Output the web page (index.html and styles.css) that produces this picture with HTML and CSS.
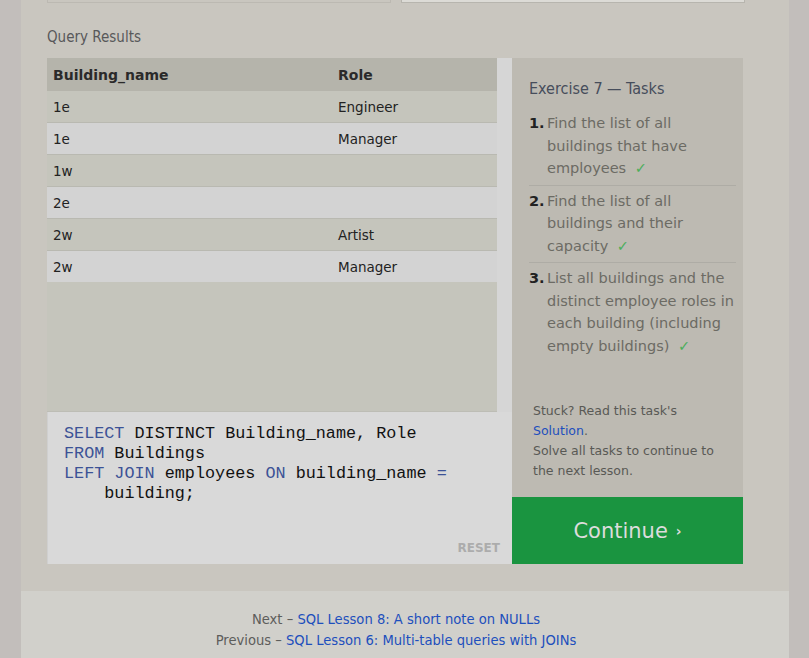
FILE: index.html
```html
<!DOCTYPE html>
<html>
<head>
<meta charset="utf-8">
<link rel="stylesheet" href="styles.css">
</head>
<body>
<div class="page">
  <div class="main">
    <div class="top-row">
      <div class="top-box"></div>
      <div class="top-box light"></div>
    </div>
    <div class="label">Query Results</div>
    <div class="exercise">
      <div class="left">
        <div class="results">
          <div class="table-wrap">
            <table class="results-table">
              <thead>
                <tr><th class="c1">Building_name</th><th>Role</th></tr>
              </thead>
              <tbody>
                <tr><td>1e</td><td>Engineer</td></tr>
                <tr><td>1e</td><td>Manager</td></tr>
                <tr><td>1w</td><td></td></tr>
                <tr><td>2e</td><td></td></tr>
                <tr><td>2w</td><td>Artist</td></tr>
                <tr><td>2w</td><td>Manager</td></tr>
              </tbody>
            </table>
          </div>
          <div class="scroll-track"></div>
        </div>
        <div class="editor">
<pre class="code"><span class="kw">SELECT</span> DISTINCT Building_name, Role
<span class="kw">FROM</span> Buildings
<span class="kw">LEFT JOIN</span> employees <span class="kw">ON</span> building_name <span class="kw">=</span>
    building;</pre>
          <div class="reset">RESET</div>
        </div>
      </div>
      <div class="right">
        <div class="tasks">
          <div class="tasks-title">Exercise 7 — Tasks</div>
          <ol class="task-list">
            <li><span class="num">1.</span><span class="txt">Find the list of all buildings that have employees <span class="check">✓</span></span></li>
            <li><span class="num">2.</span><span class="txt">Find the list of all buildings and their capacity <span class="check">✓</span></span></li>
            <li><span class="num">3.</span><span class="txt">List all buildings and the distinct employee roles in each building (including empty buildings) <span class="check">✓</span></span></li>
          </ol>
          <div class="stuck">
            Stuck? Read this task's<br><a class="link" href="#">Solution</a>.<br>Solve all tasks to continue to the next lesson.
          </div>
        </div>
        <div class="continue">Continue <span class="chev">›</span></div>
      </div>
    </div>
  </div>
  <div class="footer">
    <div>Next – <a class="link" href="#">SQL Lesson 8: A short note on NULLs</a></div>
    <div>Previous – <a class="link" href="#">SQL Lesson 6: Multi-table queries with JOINs</a></div>
  </div>
</div>
</body>
</html>
```
FILE: styles.css
```css
html, body {
  margin: 0;
  padding: 0;
}
body {
  background: #c2bebb;
  font-family: "DejaVu Sans", Verdana, sans-serif;
  height: 658px;
  overflow: hidden;
}
.page {
  margin: 0 21px;
  width: 768px;
}
.main {
  background: #c9c6bf;
  padding: 0 44px 27px 26px;
}
.top-row {
  display: flex;
  gap: 10px;
  height: 3px;
}
.top-box {
  width: 343px;
  height: 2px;
  border: 1px solid #bcb9b2;
  border-top: none;
}
.top-box.light {
  width: 343px;
  background: #dcdbd6;
  border-color: #b7b5ae;
}
.label {
  margin-top: 24px;
  margin-bottom: 11px;
  line-height: 20px;
  font-size: 15px;
  font-stretch: condensed;
  font-family: "DejaVu Sans Condensed", "DejaVu Sans", sans-serif;
  color: #58585a;
}
.exercise {
  display: grid;
  grid-template-columns: 465px 231px;
}
.left {
  display: flex;
  flex-direction: column;
}
.results {
  display: flex;
  height: 354px;
}
.table-wrap {
  width: 450px;
  background: #c5c5bc;
  border-bottom: 1px solid #bdbdb5;
}
.scroll-track {
  width: 15px;
  background: #d6d6d6;
}
.results-table {
  width: 100%;
  border-collapse: collapse;
  font-size: 13.5px;
  color: #222;
}
.results-table th {
  background: #b5b4ab;
  text-align: left;
  font-weight: bold;
  height: 33px;
  padding: 0 6px;
  font-size: 14px;
  color: #2a2a2a;
}
.results-table th.c1 {
  width: 273px;
}
.results-table td {
  height: 31px;
  padding: 0 6px;
  border-bottom: 1px solid #b9b9b1;
}
.results-table tbody tr:nth-child(odd) td {
  background: #c5c5bc;
}
.results-table tbody tr:nth-child(even) td {
  background: #d3d3d3;
}
.results-table tbody tr:last-child td {
  border-bottom: none;
}
.editor {
  background: #d9d9d9;
  height: 152px;
  display: flex;
  flex-direction: column;
  padding: 12px 12px 0 16px;
  box-sizing: border-box;
  border-left: 1px solid #cfcfcf;
}
.code {
  margin: 0;
  font-family: "Liberation Mono", "Courier New", monospace;
  font-size: 16.8px;
  line-height: 20px;
  color: #111;
  flex: 1;
}
.kw {
  color: #3c5296;
}
.reset {
  align-self: flex-end;
  font-size: 12px;
  font-weight: bold;
  color: #acacac;
  line-height: 16px;
  margin-bottom: 8px;
}
.right {
  display: flex;
  flex-direction: column;
}
.tasks {
  background: #bdbab2;
  height: 439px;
  box-sizing: border-box;
  padding: 21px 7px 16px 17px;
  display: flex;
  flex-direction: column;
}
.tasks-title {
  font-size: 16px;
  line-height: 20px;
  font-stretch: condensed;
  font-family: "DejaVu Sans Condensed", "DejaVu Sans", sans-serif;
  color: #464d5b;
  margin-bottom: 13px;
}
.task-list {
  list-style: none;
  margin: 0;
  padding: 0;
}
.task-list li {
  display: flex;
  font-size: 14.5px;
  line-height: 22.5px;
  color: #6c6b64;
  padding: 4px 0 5px;
  border-bottom: 1px solid #aeaca5;
}
.task-list li:first-child {
  padding-top: 0;
}
.task-list li:last-child {
  border-bottom: none;
}
.num {
  width: 18px;
  flex: none;
  font-weight: bold;
  color: #222;
  font-size: 14.5px;
}
.txt {
  flex: 1;
}
.check {
  display: inline-block;
  color: #4cae5b;
  margin-left: 4px;
}
.stuck {
  margin-top: auto;
  padding-left: 4px;
  font-size: 12.5px;
  line-height: 20px;
  color: #595955;
}
.link {
  color: #1d4fbd;
  text-decoration: none;
}
.continue {
  height: 67px;
  background: #1a9440;
  color: #dcdcdc;
  font-size: 21px;
  display: flex;
  align-items: center;
  justify-content: center;
  gap: 8px;
}
.chev {
  font-size: 14px;
  font-weight: bold;
}
.footer {
  background: #d1d0cb;
  padding: 17px 18px 0 0;
  height: 67px;
  box-sizing: border-box;
  text-align: center;
  font-size: 14.6px;
  line-height: 21px;
  font-stretch: condensed;
  font-family: "DejaVu Sans Condensed", "DejaVu Sans", sans-serif;
  color: #5d5d5b;
}
```
